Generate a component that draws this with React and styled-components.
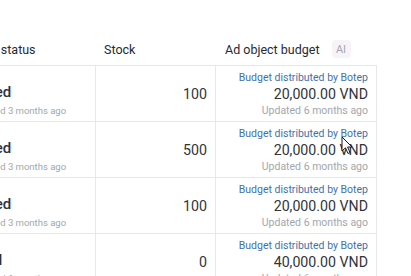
import styled, { createGlobalStyle } from 'styled-components';

const GlobalStyle = createGlobalStyle`
  html, body {
    margin: 0;
    padding: 0;
    background: #ffffff;
    overflow: hidden;
  }
  body {
    font-family: Roboto, "Liberation Sans", sans-serif;
  }
`;

const Page = styled.div`
  position: relative;
  width: 411px;
  height: 276px;
  overflow: hidden;
  padding-top: 32px;
  box-sizing: border-box;
`;

const Table = styled.div`
  display: grid;
  grid-template-columns: 154px 120px 161px;
  margin-left: -58px;
  width: max-content;
`;

const HeadCell = styled.div`
  display: flex;
  align-items: center;
  gap: 12px;
  padding-top: 1px;
  box-sizing: border-box;
  height: 34px;
  padding-left: ${(p) => p.$pad || 8}px;
  border-bottom: 1px solid #e6e8ee;
  font-size: 12.5px;
  color: #262a33;
  white-space: nowrap;
`;

const AiBadge = styled.span`
  display: inline-flex;
  align-items: center;
  justify-content: center;
  width: 19px;
  height: 18px;
  border-radius: 4px;
  background: #f6f4f8;
  color: #a2a6b0;
  font-size: 11px;
`;

const Cell = styled.div`
  display: flex;
  flex-direction: column;
  justify-content: ${(p) => p.$top ? 'flex-start' : 'center'};
  align-items: ${(p) => p.$right ? 'flex-end' : 'flex-start'};
  height: 56px;
  box-sizing: border-box;
  padding: ${(p) => p.$top ? '17px 0 0 28px' : '0 8px 0 8px'};
  border-bottom: 1px solid #e6e8ee;
  border-right: 1px solid #e6e8ee;
  white-space: nowrap;
`;

const Status = styled.span`
  font-size: 15px;
  font-weight: 500;
  line-height: 18px;
  color: #2b3141;
`;

const Faint = styled.span`
  font-size: ${(p) => p.$size || 10.5}px;
  line-height: 14px;
  margin-top: ${(p) => p.$gap || 1}px;
  color: #a3a6ad;
`;

const Amount = styled.span`
  font-size: 14.2px;
  line-height: 18px;
  color: #30343c;
`;

const Source = styled.span`
  font-size: 10.5px;
  line-height: 15px;
  color: #3f72a6;
`;

const Cursor = styled.svg`
  position: absolute;
  left: 341px;
  top: 136px;
`;

const rows = [
  { status: 'Listed', ago: '3 months ago', stock: 100, budget: '20,000.00 VND' },
  { status: 'Listed', ago: '3 months ago', stock: 500, budget: '20,000.00 VND' },
  { status: 'Listed', ago: '3 months ago', stock: 100, budget: '20,000.00 VND' },
  { status: 'Final', ago: '6 months ago', stock: 0, budget: '40,000.00 VND' },
];

export default function App() {
  return (
    <Page>
      <GlobalStyle />
      <Table>
        <HeadCell $pad={12}>Product status</HeadCell>
        <HeadCell>Stock</HeadCell>
        <HeadCell $pad={9}>
          Ad object budget
          <AiBadge>AI</AiBadge>
        </HeadCell>
        {rows.map((r, i) => (
          <>
            <Cell $top key={`s${i}`}>
              <Status>{r.status}</Status>
              <Faint $size={9.5} $gap={3}>Updated {r.ago}</Faint>
            </Cell>
            <Cell $right key={`k${i}`}>
              <Amount>{r.stock}</Amount>
            </Cell>
            <Cell $right key={`b${i}`}>
              <Source>Budget distributed by Botep</Source>
              <Amount>{r.budget}</Amount>
              <Faint>Updated 6 months ago</Faint>
            </Cell>
          </>
        ))}
      </Table>
      <Cursor width="12" height="19" viewBox="0 0 12 19">
        <path d="M1 1 L1 15 L4.5 11.8 L7 17.5 L9 16.6 L6.6 11 L11 11 Z" fill="#ffffff" stroke="#1a1a1a" strokeWidth="1" strokeLinejoin="round" />
      </Cursor>
    </Page>
  );
}
